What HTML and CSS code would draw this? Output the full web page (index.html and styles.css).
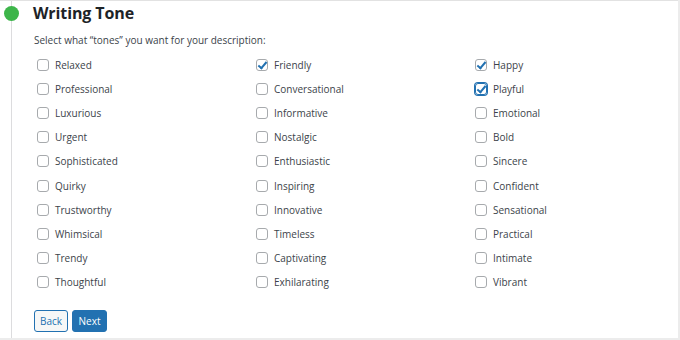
FILE: index.html
```html
<!DOCTYPE html>
<html>
<head>
<meta charset="utf-8">
<link rel="stylesheet" href="styles.css">
</head>
<body>
<div class="panel">
  <div class="track">
    <span class="dot"></span>
    <h2 class="title">Writing Tone</h2>
    <p class="lead">Select what “tones” you want for your description:</p>
    <div class="grid">
      <label class="opt"><span class="box"></span>Relaxed</label>
      <label class="opt"><span class="box on"></span>Friendly</label>
      <label class="opt"><span class="box on"></span>Happy</label>
      <label class="opt"><span class="box"></span>Professional</label>
      <label class="opt"><span class="box"></span>Conversational</label>
      <label class="opt"><span class="box on focus"></span>Playful</label>
      <label class="opt"><span class="box"></span>Luxurious</label>
      <label class="opt"><span class="box"></span>Informative</label>
      <label class="opt"><span class="box"></span>Emotional</label>
      <label class="opt"><span class="box"></span>Urgent</label>
      <label class="opt"><span class="box"></span>Nostalgic</label>
      <label class="opt"><span class="box"></span>Bold</label>
      <label class="opt"><span class="box"></span>Sophisticated</label>
      <label class="opt"><span class="box"></span>Enthusiastic</label>
      <label class="opt"><span class="box"></span>Sincere</label>
      <label class="opt"><span class="box"></span>Quirky</label>
      <label class="opt"><span class="box"></span>Inspiring</label>
      <label class="opt"><span class="box"></span>Confident</label>
      <label class="opt"><span class="box"></span>Trustworthy</label>
      <label class="opt"><span class="box"></span>Innovative</label>
      <label class="opt"><span class="box"></span>Sensational</label>
      <label class="opt"><span class="box"></span>Whimsical</label>
      <label class="opt"><span class="box"></span>Timeless</label>
      <label class="opt"><span class="box"></span>Practical</label>
      <label class="opt"><span class="box"></span>Trendy</label>
      <label class="opt"><span class="box"></span>Captivating</label>
      <label class="opt"><span class="box"></span>Intimate</label>
      <label class="opt"><span class="box"></span>Thoughtful</label>
      <label class="opt"><span class="box"></span>Exhilarating</label>
      <label class="opt"><span class="box"></span>Vibrant</label>
    </div>
    <div class="actions">
      <button class="btn back">Back</button>
      <button class="btn next">Next</button>
    </div>
  </div>
</div>
</body>
</html>
```
FILE: styles.css
```css
* { box-sizing: border-box; }
html, body { margin: 0; padding: 0; }
body {
  width: 680px;
  height: 340px;
  background: #ececec;
  font-family: "Open Sans", "Noto Sans", sans-serif;
  color: #3c434a;
  overflow: hidden;
}
.panel {
  width: 678px;
  height: 338px;
  background: #fff;
  border-top: 1px solid #e2e2e2;
  padding-left: 11px;
}
.track {
  position: relative;
  height: 100%;
  border-left: 1px solid #dcdcde;
  padding-left: 21px;
}
.dot {
  position: absolute;
  left: -8px;
  top: 5px;
  width: 15px;
  height: 15px;
  border-radius: 50%;
  background: #3db54a;
}
.title {
  margin: 0;
  padding-top: 2px;
  font-size: 16px;
  line-height: 20px;
  font-weight: 700;
  color: #1d2327;
  letter-spacing: -0.1px;
}
.lead {
  margin: 10px 0 0 1px;
  font-size: 10px;
  line-height: 14px;
  color: #3c434a;
}
.grid {
  display: grid;
  grid-template-columns: 219px 219px 219px;
  grid-auto-rows: 24.1px;
  margin: 6px 0 0 4px;
}
.opt {
  display: flex;
  align-items: center;
  font-size: 10px;
  color: #3c434a;
}
.box {
  position: relative;
  width: 12px;
  height: 12px;
  border: 1px solid #a7aaad;
  border-radius: 3px;
  margin-right: 6px;
  flex: none;
}
.box.on::after {
  content: "";
  position: absolute;
  left: 3px;
  top: 0px;
  width: 3px;
  height: 7px;
  border: solid #2271b1;
  border-width: 0 2px 2px 0;
  transform: rotate(40deg);
}
.box.focus {
  border-color: #2271b1;
  box-shadow: 0 0 0 1px #2271b1;
}
.actions {
  display: flex;
  gap: 4px;
  margin: 16px 0 0 1px;
}
.btn {
  height: 22px;
  padding: 0;
  font-family: inherit;
  font-size: 10px;
  border-radius: 3px;
  border: 1px solid #2271b1;
}
.back {
  width: 34px;
  background: #f6f7f7;
  color: #2271b1;
}
.next {
  width: 35px;
  background: #2271b1;
  color: #fff;
}
```
